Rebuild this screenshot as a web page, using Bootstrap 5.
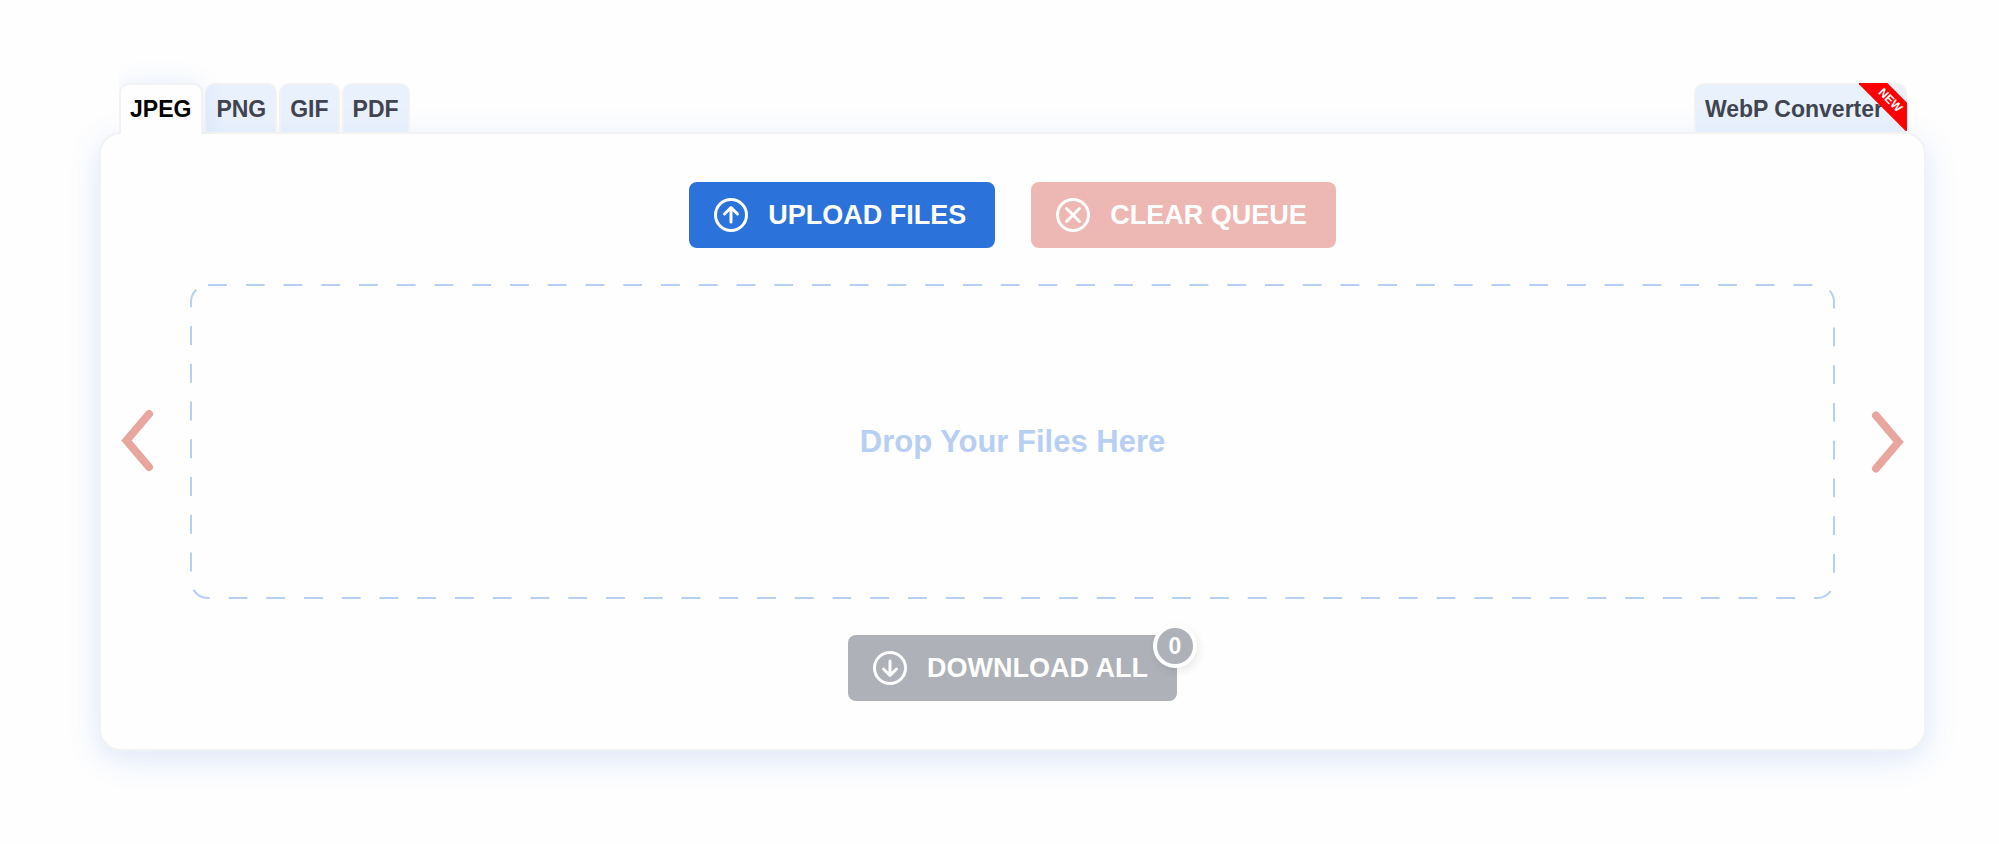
<!DOCTYPE html>
<html lang="en">
<head>
<meta charset="utf-8">
<meta name="viewport" content="width=device-width, initial-scale=1">
<title>Image Converter</title>
<link href="https://cdn.jsdelivr.net/npm/bootstrap@5.3.0/dist/css/bootstrap.min.css" rel="stylesheet">
<style>
  body { font-family: "Liberation Sans", Arial, sans-serif; font-weight: 700; background: #fefefe; }
  .converter { padding: 83px 73px 64px 99px; }
  .format-tabs { padding: 0 19px 0 20px; gap: 2px; }
  .format-tab {
    position: relative; height: 49px; padding: 0 9px; border: 2px solid #f2f2f2; border-bottom: 0;
    border-radius: 10px 10px 0 0; background: rgba(215, 230, 249, .55);
    color: #3f4450; font-size: 23px; line-height: 48px; text-decoration: none; white-space: nowrap;
  }
  .format-tab.active {
    height: 51px; margin-bottom: -2px; padding-right: 10px; z-index: 1; background: #fefefe; color: #000;
    box-shadow: 0 0 24px rgba(43, 115, 219, .12); clip-path: inset(-30px -30px 0 0);
  }
  .format-tab.webp { padding-right: 22px; }
  .corner-ribbon { position: absolute; top: -2px; right: -2px; width: 48px; height: 48px; overflow: hidden; }
  .corner-ribbon span {
    position: absolute; top: 7px; left: -14px; width: 90px; height: 21px; transform: rotate(45deg);
    background: #f00; color: #fff; font-size: 12px; line-height: 21px; text-align: center;
  }
  .panel {
    border: 2px solid #f2f2f2; border-radius: 22px; background: #fefefe; padding: 48px 0;
    box-shadow: 0 8px 32px rgba(43, 115, 219, .16);
  }
  .panel-rows { gap: 36px; }
  .panel-grid { display: grid; grid-template-columns: 89px 1fr 89px; }
  .action-row { gap: 36px; }
  .action {
    position: relative; height: 66px; padding: 0 29px 0 25px; gap: 20px; border: 0; border-radius: 8px;
    color: #fff; font-size: 27px; font-weight: 700; line-height: 66px; white-space: nowrap;
  }
  .action svg { width: 34px; height: 34px; fill: none; stroke: #fff; stroke-width: 3; stroke-linecap: round; stroke-linejoin: round; }
  .upload { background: #2b73db; }
  .clear { background: #edb8b3; }
  .download { background: #aeb1b7; }
  .queue-count {
    position: absolute; top: -11px; right: -20px; width: 44px; height: 44px; border: 4px solid #fff; border-radius: 50%;
    background: #aeb1b7; font-size: 23px; line-height: 36px; text-align: center; box-shadow: 2px 4px 8px rgba(0, 0, 0, .08);
  }
  .drop-area { height: 315px; padding-top: 2px; color: #b7cff3; font-size: 31px; }
  .drop-area svg { position: absolute; inset: 0; width: 100%; height: 100%; }
  .drop-area rect { width: calc(100% - 2px); height: calc(100% - 2px); fill: none; stroke: #b7cff3; stroke-width: 2; }
  .arrow-btn { border: 0; background: none; padding: 0 19px; }
  .arrow-btn svg { display: block; width: 32px; height: 66px; overflow: visible; fill: none; stroke: #e9a69e; stroke-width: 8; stroke-linecap: round; }
</style>
</head>
<body>
<main class="converter container-fluid">
  <nav class="format-tabs d-flex" aria-label="Formats">
    <a class="format-tab active" href="#jpeg" aria-current="page">JPEG</a>
    <a class="format-tab" href="#png">PNG</a>
    <a class="format-tab" href="#gif">GIF</a>
    <a class="format-tab" href="#pdf">PDF</a>
    <a class="format-tab webp ms-auto" href="#webp">WebP Converter<span class="corner-ribbon"><span>NEW</span></span></a>
  </nav>
  <section class="panel">
    <div class="panel-rows d-flex flex-column">
      <div class="action-row d-flex justify-content-center">
        <button type="button" class="action upload d-flex align-items-center">
          <svg viewBox="0 0 34 34" aria-hidden="true"><circle cx="17" cy="17" r="15.5"/><path d="M17 24V10M10.500 16L17 9.500L23.500 16"/></svg>
          UPLOAD FILES
        </button>
        <button type="button" class="action clear d-flex align-items-center">
          <svg viewBox="0 0 34 34" aria-hidden="true"><circle cx="17" cy="17" r="15.5"/><path d="M10.500 10.500L23.500 23.500M23.500 10.500L10.500 23.500"/></svg>
          CLEAR QUEUE
        </button>
      </div>
      <div class="panel-grid align-items-center">
        <button type="button" class="arrow-btn" aria-label="Previous">
          <svg viewBox="0 0 32 66"><path d="M29 5L6.500 31.500L29 58"/></svg>
        </button>
        <div class="drop-area position-relative d-flex align-items-center justify-content-center">
          <svg aria-hidden="true"><rect x="1" y="1" rx="17" pathLength="1028.4" stroke-dasharray="5 5"/></svg>
          <span>Drop Your Files Here</span>
        </div>
        <button type="button" class="arrow-btn d-flex justify-content-end" aria-label="Next">
          <svg viewBox="0 0 32 66"><path d="M3 6.500L25.500 33L3 59.500"/></svg>
        </button>
      </div>
      <div class="action-row d-flex justify-content-center">
        <button type="button" class="action download d-flex align-items-center">
          <svg viewBox="0 0 34 34" aria-hidden="true"><circle cx="17" cy="17" r="15.5"/><path d="M17 10V24M10.500 18L17 24.500L23.500 18"/></svg>
          DOWNLOAD ALL
          <span class="queue-count">0</span>
        </button>
      </div>
    </div>
  </section>
</main>
<script src="https://cdn.jsdelivr.net/npm/bootstrap@5.3.0/dist/js/bootstrap.bundle.min.js"></script>
</body>
</html>
